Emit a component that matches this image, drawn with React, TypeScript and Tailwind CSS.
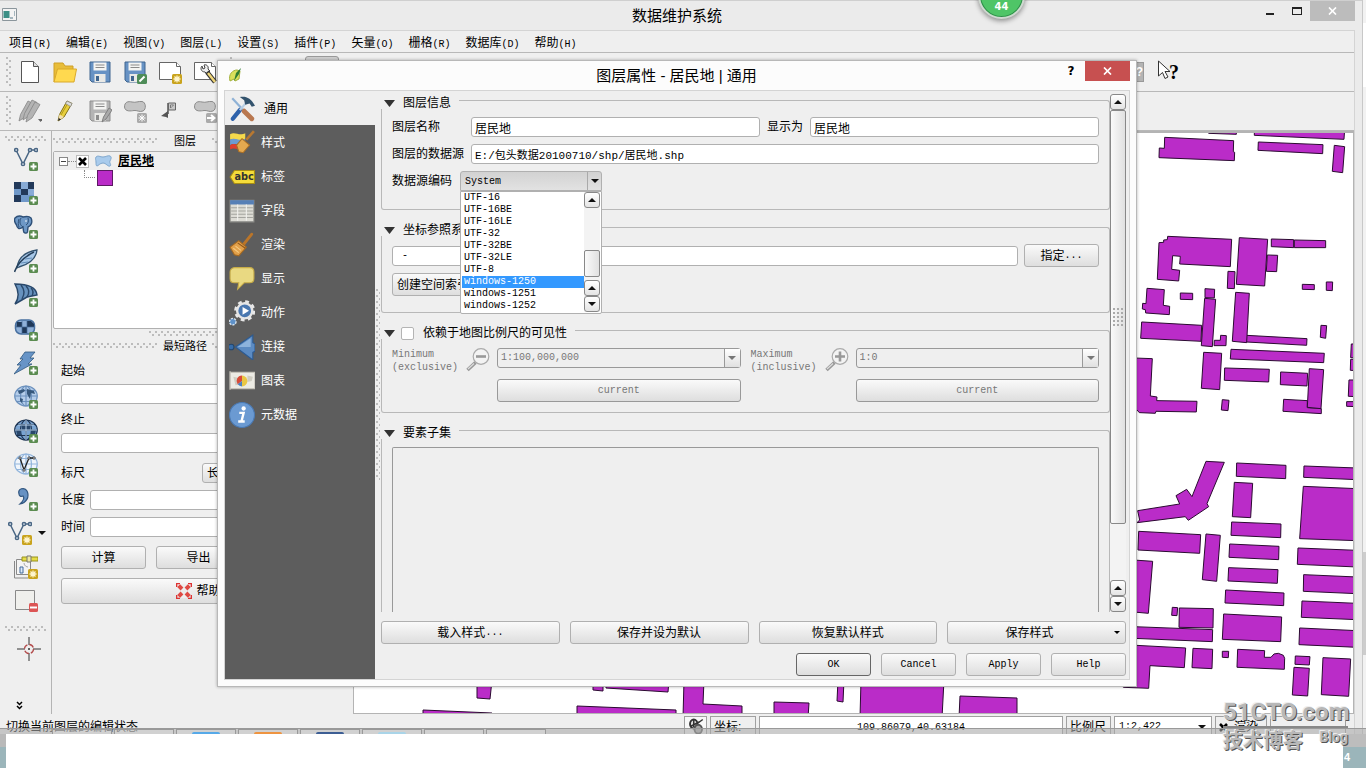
import type { JSX, ReactNode } from 'react'

const CJK = "font-['Liberation_Sans','Noto_Sans_CJK_SC',sans-serif] text-[12px] leading-[14px]"
const MONO = "font-['Liberation_Mono','Noto_Sans_CJK_SC',monospace] text-[10px] leading-[12px]"
const FIELD = 'h-5 min-w-0 rounded-[3px] border border-[#b0b0b0] bg-white px-[3px] text-black outline-none'
const BUTTON =
  'flex items-center justify-center rounded-[3px] border border-[#b0b0b0] bg-linear-to-b from-[#fafafa] to-[#dedede] text-black'
const DOTS =
  'bg-[radial-gradient(circle_at_1px_1px,#bcbcbc_1px,transparent_1.5px),radial-gradient(circle_at_4px_4px,#bcbcbc_1px,transparent_1.5px)] bg-[size:6px_6px]'

interface Kids {
  children: ReactNode
}

const Latin = ({ children }: Kids): JSX.Element => <span className={MONO}>{children}</span>

const Icon = ({ children, size = 24 }: Kids & { size?: number }): JSX.Element => (
  <svg width={size} height={size} viewBox="0 0 24 24" fill="none" className="shrink-0" aria-hidden="true">
    {children}
  </svg>
)

const Caret = ({ up = false, color = '#111' }: { up?: boolean; color?: string }): JSX.Element => (
  <svg width="8" height="4" viewBox="0 0 8 4" className="shrink-0" aria-hidden="true">
    <path d={up ? 'M0 4h8L4 0z' : 'M0 0h8L4 4z'} fill={color} />
  </svg>
)

// Small green "add" badge in the lower right corner of a layer icon.
const Plus = (): JSX.Element => (
  <g>
    <rect x="15" y="15" width="9" height="9" rx="1.5" fill="#5b8c51" />
    <path d="M19.5 16.5v6M16.5 19.5h6" stroke="#fff" strokeWidth="1.8" />
  </g>
)

const Star = (): JSX.Element => (
  <g>
    <rect x="14" y="14" width="10" height="10" rx="1.5" fill="#c9a31d" />
    <path d="M19 15.5v7M15.5 19h7M16.5 16.5l5 5M21.5 16.5l-5 5" stroke="#fff6cf" strokeWidth="1.3" />
  </g>
)

const Nodes = (): JSX.Element => (
  <g stroke="#4a6785" strokeWidth="1.5">
    <path d="M2 3l7 14 7-14h6" />
    <g fill="#e8eef4">
      <circle cx="2.2" cy="3" r="1.6" />
      <circle cx="9" cy="17" r="1.6" />
      <circle cx="16" cy="3" r="1.6" />
      <circle cx="22" cy="3" r="1.6" />
    </g>
  </g>
)

const Floppy = ({ body, line }: { body: string; line: string }): JSX.Element => (
  <g>
    <path d="M2 2h20v20H4l-2-2z" fill={body} stroke={line} />
    <path d="M5.5 2.5h13v8h-13z" fill="#f4f4f2" />
    <path d="M7.5 5h9M7.5 7.5h9" stroke="#8a8a8a" />
    <path d="M6.5 14h11v8h-11z" fill="#e9e9e6" />
    <path d="M8 16h3v5H8z" fill={line} />
  </g>
)

const Sheet = (): JSX.Element => (
  <g fill="#fff" stroke="#666">
    <path d="M1.5 2.5h17l4 4v13h-21z" />
    <path d="M18.5 2.5v4h4" />
  </g>
)

const Blob = (): JSX.Element => (
  <path
    d="M1.5 8C1.5 3 5 2 9 3s6-1 10-.5 4.5 8 1 9.5-6-1-9-.5S2 13 1.5 8z"
    fill="#c4c4c4"
    stroke="#8c8c8c"
  />
)

const Globe = ({ fill, line }: { fill: string; line: string }): JSX.Element => (
  <g stroke={line} strokeWidth="1.2">
    <ellipse cx="12" cy="11" rx="11.3" ry="10" fill={fill} />
    <ellipse cx="12" cy="11" rx="5.5" ry="10" />
    <path d="M1 11h22M3 5.5h18M3 16.5h18M12 1v20" />
  </g>
)

const PENCIL = 'M5 22l1.5-6.500L14 2l5 2.500-8 13.500z'

const FileTools = (): JSX.Element[] => [
  <Icon key="new">
    <path d="M3.5 1.5h12l5 5v16h-17z" fill="#fff" stroke="#555" />
    <path d="M15.5 1.5v5h5" fill="#ddd" stroke="#555" />
  </Icon>,
  <Icon key="open">
    <path d="M1 22V3h9l2 3h8v4" fill="#e8bd3a" stroke="#cf9f26" />
    <path d="M1 22L4.5 9H23.5L21 22z" fill="#ffd94f" stroke="#d9a92b" />
  </Icon>,
  <Icon key="save">
    <Floppy body="#6792c4" line="#3f658f" />
  </Icon>,
  <Icon key="saveas">
    <Floppy body="#6792c4" line="#3f658f" />
    <rect x="14" y="14" width="10" height="10" rx="1.5" fill="#4e8c58" />
    <path d="M16.5 21.5l5-5" stroke="#fff" strokeWidth="2" />
  </Icon>,
  <Icon key="layout">
    <Sheet />
    <Star />
  </Icon>,
  <Icon key="composer">
    <Sheet />
    <path d="M9 6c-2 2-1 6 3 6l2 2 3-3-2-2c1-3-2-5-4-4l1 3-2 1z" fill="#eee" stroke="#444" />
    <path d="M14 12l8 10" stroke="#333" strokeWidth="4.5" />
    <path d="M15 13l7 9" stroke="#f0d77b" strokeWidth="2.5" />
  </Icon>,
]

const EditTools = (): JSX.Element[] => [
  <Icon key="edits">
    <g fill="#b4b4b4" stroke="#858585" strokeWidth=".8">
      <path d={PENCIL} transform="translate(-4 0)" />
      <path d={PENCIL} transform="translate(0 -1)" />
      <path d={PENCIL} transform="translate(3 1)" />
    </g>
    <path d="M20 20h5l-2.500 3z" fill="#666" />
  </Icon>,
  <Icon key="toggle">
    <path d={PENCIL} fill="#e8cf3c" stroke="#807018" />
    <path d="M8 16l7-12" stroke="#b39a1c" />
    <path d="M14 2l5 2.500-1.500 3-5-3z" fill="#ddd" stroke="#888" strokeWidth=".7" />
    <path d="M6.500 15.500l4.500 2.500-6 4z" fill="#f2dfae" />
    <path d="M5 22l.7-3 2.300 1.500z" fill="#222" />
  </Icon>,
  <Icon key="saveedits">
    <Floppy body="#b4b4b4" line="#8d8d8d" />
    <path d="M14 23l1.500-5L21 9l3 2-6 9z" fill="#aaa" stroke="#808080" />
  </Icon>,
  <Icon key="addfeature">
    <Blob />
    <rect x="14" y="14" width="10" height="10" rx="1.5" fill="#aaa" />
    <path d="M19 15.5v7M15.5 19h7M16.5 16.5l5 5M21.5 16.5l-5 5" stroke="#fff" />
  </Icon>,
  <Icon key="move">
    <path d="M3 17l7-5v7l-2-1z" fill="#555" />
    <path d="M10 15V4" stroke="#555" strokeWidth="1.500" />
    <path d="M10.500 4h7v7h-7z" fill="#c8c8c8" stroke="#666" />
    <path d="M12.500 9V6h3l-3 3" fill="#fff" stroke="#777" />
  </Icon>,
  <Icon key="movefeature">
    <Blob />
    <rect x="13" y="14" width="11" height="10" rx="1.5" fill="#aaa" />
    <path d="M14 19h7M18 16l3.500 3-3.500 3" stroke="#fff" strokeWidth="2" />
  </Icon>,
]

const LayerTools = (): JSX.Element[] => [
  <Icon key="vector">
    <Nodes />
    <Plus />
  </Icon>,
  <Icon key="raster">
    <path d="M0 1h20v20H0z" fill="#6f98c9" />
    <path d="M0 1h7v7H0zM14 1h6v7h-6zM7 8h7v6H7zM0 14h7v7H0z" fill="#22395a" />
    <path d="M7 1h7v7H7zM14 8h6v6h-6z" fill="#88abd6" />
    <Plus />
  </Icon>,
  <Icon key="postgis">
    <path
      d="M1 3c3-3 6-2 8-1 4-1 6-1 8 1 2 4 0 8-3 9l-.5 5c-1 2-4 1-4-1l-.5-4C5 15 3 13 2.5 10 1 8 0 5 1 3z"
      fill="#6e98c6"
      stroke="#2e5078"
      strokeWidth="1.4"
    />
    <path d="M7 3c-2 4-1 7 2 9M14 3c1 3 0 6-2 7M5 4c-1 3-1 6 0 8" stroke="#2e5078" />
    <circle cx="12" cy="6" r=".8" fill="#fff" />
    <Plus />
  </Icon>,
  <Icon key="spatialite">
    <path d="M3 19C4 9 11 3 23 1c-1 9-7 14-18 17z" fill="#a8c8e8" stroke="#34536f" strokeWidth="1.3" />
    <path d="M.5 23C3 15 10 8 20 3" stroke="#27415c" strokeWidth="1.5" />
    <path d="M7 14l7-1M11 10l7-1" stroke="#648eb8" />
    <Plus />
  </Icon>,
  <Icon key="mssql">
    <path d="M1 1c9 0 21 2 22 11L13 14 1 21c5-7 4-13 0-20z" fill="#6792be" stroke="#29486b" strokeWidth="1.5" />
    <path d="M7 2c4 5 4 9 1 14M12 3c4 4 3 8 1 11M17 5c3 3 2 6 1 8" stroke="#29486b" strokeWidth="1.4" />
    <Plus />
  </Icon>,
  <Icon key="oracle">
    <rect x="1.5" y="3" width="19" height="14" rx="5.5" fill="#8fb0d8" stroke="#4870a0" strokeWidth="1.5" />
    <path d="M3 5h5v5H2.500zM13 4h4l3 3v3h-7zM8 10h5v6H8z" fill="#1f3858" />
    <path d="M2 10h18M8 4v13M13 4v13" stroke="#456b98" strokeWidth=".7" />
    <Plus />
  </Icon>,
  <Icon key="sqlanywhere">
    <path d="M11 1h10l-5 6h4l-6 6h4L0 23l7-9H3l6-6H6z" fill="#6794c7" stroke="#315980" strokeWidth=".8" />
    <Plus />
  </Icon>,
  <Icon key="wms">
    <Globe fill="#b4cdea" line="#6c91bd" />
    <path d="M4 6l6-2 1 2-3 2-3 1zM13 4l7 2 1 3-4-1-1 6-3-5zM6 13l3 1-1 4-2-2z" fill="#36587c" />
    <Plus />
  </Icon>,
  <Icon key="wcs">
    <Globe fill="#7aa4d2" line="#1d3452" />
    <path d="M8 6h8v5H8zM2 11h5v5H3zM17 11h5l-1 5h-4z" fill="#29476b" />
    <path d="M1 11h22M12 1v20M4 6h16" stroke="#b7d0ea" />
    <Plus />
  </Icon>,
  <Icon key="wfs">
    <Globe fill="#f0f5fb" line="#92b5dc" />
    <path d="M6 5l4 12 5-12h5" stroke="#222" strokeWidth="1.3" />
    <path d="M5 4h2v2H5zM9 16h2v2H9zM14 4h2v2h-2zM19 4h2v2h-2z" fill="#fff" stroke="#333" strokeWidth=".8" />
    <Plus />
  </Icon>,
  <Icon key="csv">
    <path
      d="M5 7c-2-6 6-7 8-3 3 6-1 12-7 13 3-3 5-6 3-8-2 1-4 0-4-2z"
      fill="#6792c3"
      stroke="#31567f"
      strokeWidth="1.2"
    />
    <Plus />
  </Icon>,
]

const LATE_TOOLS: [string, JSX.Element][] = [
  [
    'gps',
    <g key="g">
      <path d="M.5 6v17H14" stroke="#888" />
      <path d="M2.5 4.5h14v15h-14z" fill="#f4f4f4" stroke="#8a8a8a" />
      <path d="M8 2h16v4H8z" fill="#e5dc45" stroke="#96901f" />
      <path d="M13 1h4v6h-4z" fill="#efe9a0" stroke="#777" />
      <path d="M6 12h3v6H6z" fill="#dceafa" stroke="#426b9b" />
      <path d="M10 8c0 3 3 4 4 4" stroke="#aaa" />
      <Star />
    </g>,
  ],
  [
    'remove',
    <g key="r">
      <path d="M1.5 1.5h19v19h-19z" fill="#efefec" stroke="#888" />
      <rect x="15" y="14" width="9" height="9" rx="1.5" fill="#dc5555" />
      <path d="M16 18.5h7" stroke="#fff" strokeWidth="2" />
    </g>,
  ],
]

const SECTIONS: { label: string; art: JSX.Element }[] = [
  {
    label: '通用',
    art: (
      <g>
        <path d="M3 2l12 13" stroke="#8fb2d6" strokeWidth="2" />
        <path d="M10 13L3.500 21" stroke="#2e62ab" strokeWidth="4" strokeLinecap="round" />
        <path d="M10 13l6-7" stroke="#b9cfe4" strokeWidth="2" />
        <path d="M14 14l7 7" stroke="#b97850" strokeWidth="4.5" strokeLinecap="round" />
        <path d="M10 1c6-1 10 1 14 8l-3 1-2-3-4 1-1-4z" fill="#33536d" />
      </g>
    ),
  },
  {
    label: '样式',
    art: (
      <g>
        <path d="M1 4c5-3 8 2 14-1v5C9 12 6 7 1 9z" fill="#f5d94c" />
        <path d="M1 9c5-3 8 2 14-1v4C9 16 6 11 1 14z" fill="#6d9bd0" />
        <path d="M1 14c5-3 8 2 13-1v4c-5 3-8-2-13 1z" fill="#df3f2d" />
        <path d="M23 1l-7 8" stroke="#b87831" strokeWidth="2.4" />
        <path d="M12 8l7 6-6 7-4-1-2-6z" fill="#e5a94f" stroke="#a96e25" />
      </g>
    ),
  },
  {
    label: '标签',
    art: (
      <g>
        <path d="M1 12l4-6h18.500v12H5z" fill="#f5dc3a" stroke="#a98e14" />
        <text x="5" y="15" fontSize="9" fontWeight="700" fontFamily="DejaVu Sans" fill="#333">
          abc
        </text>
      </g>
    ),
  },
  {
    label: '字段',
    art: (
      <g>
        <path d="M1 2h22v20H1z" fill="#dddcd5" stroke="#8c8c88" />
        <path d="M1 2h22v4H1z" fill="#5780b6" />
        <path d="M2 9h20M2 12h20M2 15h20M2 18h20" stroke="#a5a5a0" />
        <path d="M8 6v15M16 6v15" stroke="#f2f2ee" />
      </g>
    ),
  },
  {
    label: '渲染',
    art: (
      <g>
        <path d="M21 2l-8 10" stroke="#ba7529" strokeWidth="2.6" strokeLinecap="round" />
        <path d="M9 8l7 6-7 8-4-1-4-7z" fill="#e2a04a" stroke="#a66920" />
        <path d="M8 10l7 5" stroke="#8d5519" />
        <path d="M4 15l5 4M6 13l5 4" stroke="#f5cc83" />
      </g>
    ),
  },
  {
    label: '显示',
    art: (
      <path
        d="M5 1.500h14c3 0 4 2 4 4v6c0 3-2 4-4 4h-5l-6 6 1-6H5c-3 0-4-2-4-4v-6c0-2 2-4 4-4z"
        fill="#e9d982"
        stroke="#c8ad48"
      />
    ),
  },
  {
    label: '动作',
    art: (
      <g>
        <circle cx="14.500" cy="10" r="8.500" stroke="#e8e8e8" strokeWidth="2.500" strokeDasharray="3.500 3.200" />
        <circle cx="14.500" cy="10" r="7" fill="#4977b0" stroke="#e5e5e5" strokeWidth="2.200" />
        <path d="M12.500 6.500l6 3.500-6 3.500z" fill="#fff" />
        <circle cx="3.500" cy="20" r="3" fill="#5e91c8" stroke="#d8e2eb" strokeWidth="1.3" strokeDasharray="2 1" />
      </g>
    ),
  },
  {
    label: '连接',
    art: (
      <g>
        <circle cx="2" cy="12" r="2.600" fill="#366ca9" stroke="#23476f" />
        <path d="M6 12L22 1v7l2 1v7l-2 1v7z" fill="#5c8bc2" stroke="#2c5a91" />
        <path d="M8 12l12-8v8z" fill="#8db3dc" />
      </g>
    ),
  },
  {
    label: '图表',
    art: (
      <g>
        <path d="M1 3v17M1 4h23v15H1z" fill="#ecebe4" stroke="#c5c3ba" strokeWidth="1.3" />
        <path d="M4 8l4 1 2 6-4 1zM17 7l5 1-1 4-4 1z" fill="#cfcdc2" />
        <path d="M12 12V7a5 5 0 010 10z" fill="#e9c744" />
        <path d="M12 12V7a5 5 0 00-4 8z" fill="#d84b38" />
        <path d="M12 12l-4 3a5 5 0 004 2z" fill="#4d7fc0" />
      </g>
    ),
  },
  {
    label: '元数据',
    art: (
      <g>
        <circle cx="12" cy="12" r="11.5" fill="#6b9ad2" stroke="#4a7ab5" />
        <circle cx="13.5" cy="6" r="2" fill="#fff" />
        <path d="M9.500 10h4l-2 8h3M8.500 18h3" stroke="#fff" strokeWidth="2.2" />
      </g>
    ),
  },
]

// Building footprints, in thirds of a pixel.
const NORTH = [
  '194,52 401,62 400,95 404,97 403,122 177,113 178,84 193,85',
  '326,30 409,30 409,43 326,40',
  '463,30 734,30 732,58 463,46',
  '475,66 669,74 668,101 474,91',
  '703,76 734,80 728,158 697,154',
  '203,349 395,358 391,440 239,432 241,409 218,407 215,448 239,451 236,483 172,478 177,368 191,367 191,360 202,359',
  '418,353 503,358 494,498 409,493',
  '514,357 581,359 581,383 514,380',
  '583,360 677,362 677,383 583,383',
  '502,405 533,406 530,455 499,454',
  '384,454 405,455 403,506 382,505',
  '607,493 643,494 643,509 607,508',
  '679,486 698,486 697,512 679,511',
  '141,505 193,509 190,556 209,559 208,584 137,579 136,569 127,567 128,550 138,551',
  '241,519 278,520 278,539 241,538',
  '315,506 344,508 343,534 315,533',
  '125,606 305,616 303,664 122,655',
  '314,535 347,538 337,680 304,677',
  '438,646 621,656 620,676 438,666',
  '407,517 448,520 440,668 397,664',
  '362,646 379,647 378,677 342,677 343,661 361,661',
  '663,616 680,617 677,655 661,652',
  '393,688 673,700 671,728 391,717',
  '311,697 365,700 359,809 304,805',
  '374,744 508,748 506,786 373,781',
  '542,756 623,760 621,798 541,794',
  '551,838 622,842 622,863 664,866 664,881 549,874',
  '628,746 671,749 663,866 622,862',
  '100,714 157,716 151,828 171,831 170,842 291,844 289,876 168,874 166,880 118,878 111,870 100,865',
  '367,839 387,841 384,872 364,870',
  '754,672 770,672 770,714 752,713',
  '752,718 770,718 770,752 751,751',
  '747,780 770,780 770,830 745,829',
  '740,845 770,845 770,860 740,859',
]

const SOUTH = [
  '318,64 373,67 321,191 326,200 265,241 256,230 111,248 119,240 113,212 239,192 228,167 260,148 276,170',
  '410,69 558,76 557,116 409,109',
  '403,127 458,130 452,233 397,230',
  '395,246 543,252 542,293 393,286',
  '389,312 537,319 536,359 387,352',
  '386,383 534,389 532,430 384,423',
  '377,450 552,459 551,497 375,489',
  '371,522 545,531 542,605 367,598',
  '612,78 770,84 770,119 611,112',
  '610,139 770,146 770,302 599,296',
  '594,324 770,331 770,381 592,373',
  '611,404 770,411 770,461 610,454',
  '606,483 770,490 770,539 604,532',
  '599,564 770,572 770,622 597,614',
  '116,274 302,284 299,340 114,330',
  '318,282 361,286 350,424 307,419',
  '100,360 158,364 145,520 100,516',
  '217,502 233,503 231,527 215,526',
  '238,504 340,506 339,564 237,562',
  '100,560 338,569 337,605 100,595',
  '70,614 257,624 253,683 150,677 146,745 70,742',
  '279,625 338,628 336,686 276,683',
  '367,634 386,634 385,653 367,652',
  '413,628 494,632 493,652 513,652 522,642 535,640 550,646 554,655 553,688 411,682',
  '586,648 630,650 628,675 585,673',
  '582,682 628,685 623,768 577,765',
  '669,653 752,657 746,769 664,764',
]

const FAR_SOUTH = [
  '477,680 492,680 490,699 477,698',
  '423,710 492,713 492,718 423,718',
  '593,680 603,680 603,691 593,690',
  '606,680 669,680 668,692 606,688',
  '577,706 676,710 676,718 577,718',
  '684,680 704,680 703,704 742,706 742,718 683,718',
  '774,702 809,703 808,718 774,718',
  '838,680 844,680 843,702 837,701',
  '861,680 944,680 942,718 860,718',
  '960,696 1017,698 1017,718 959,718',
]

const ENCODINGS = [
  'UTF-16',
  'UTF-16BE',
  'UTF-16LE',
  'UTF-32',
  'UTF-32BE',
  'UTF-32LE',
  'UTF-8',
  'windows-1250',
  'windows-1251',
  'windows-1252',
]

const MENUS = [
  ['项目', 'R'],
  ['编辑', 'E'],
  ['视图', 'V'],
  ['图层', 'L'],
  ['设置', 'S'],
  ['插件', 'P'],
  ['矢量', 'O'],
  ['栅格', 'R'],
  ['数据库', 'D'],
  ['帮助', 'H'],
]

const Shapes = ({ list, width }: { list: string[]; width: number }): JSX.Element => (
  <g fill="#ba2cc8" stroke="#2a0a30" strokeWidth={width}>
    {list.map((points) => (
      <polygon key={points} points={points} />
    ))}
  </g>
)

const MapCanvas = (): JSX.Element => (
  <main className="min-w-0 flex-1 overflow-hidden border border-t-2 border-[#b4b4b4] bg-white">
    <svg className="block h-full w-full" aria-label="map">
      <g transform="translate(746 -13) scale(.3333)">
        <Shapes list={NORTH} width={3} />
      </g>
      <g transform="translate(746 307) scale(.3333)">
        <Shapes list={SOUTH} width={3} />
      </g>
      <g transform="translate(-354 -133)">
        <Shapes list={FAR_SOUTH} width={1} />
      </g>
    </svg>
  </main>
)

const ToolRow = ({ children }: Kids): JSX.Element => (
  <div className="flex h-[39px] shrink-0 items-center border-b border-[#b8b8b8] pl-[6px]">
    <span className={`h-[30px] w-[6px] shrink-0 ${DOTS}`} />
    {children}
  </div>
)

const ToolButton = ({ children }: Kids): JSX.Element => (
  <button type="button" className="flex h-[34px] w-[35px] shrink-0 items-center justify-center">
    {children}
  </button>
)

const ToolColumn = (): JSX.Element => (
  <aside className="flex w-[52px] shrink-0 flex-col items-center border-r border-[#b4b4b4] pt-[5px]">
    <span className={`h-[6px] w-[42px] shrink-0 ${DOTS}`} />
    {LayerTools().map((tool) => (
      <ToolButton key={tool.key}>{tool}</ToolButton>
    ))}
    <button type="button" className="flex h-[34px] w-full shrink-0 items-center gap-[6px] pl-[8px]">
      <Icon>
        <Nodes />
        <Star />
      </Icon>
      <Caret />
    </button>
    {LATE_TOOLS.map(([id, art]) => (
      <ToolButton key={id}>
        <Icon>{art}</Icon>
      </ToolButton>
    ))}
    <span className={`mt-[8px] h-[6px] w-[42px] shrink-0 ${DOTS}`} />
    <span className="ml-[6px]">
      <ToolButton>
        <Icon>
          <path d="M12 0v8M12 16v8M0 12h8M16 12h8M12 11v2M11 12h2" stroke="#333" />
          <circle cx="12" cy="12" r="4.5" stroke="#b24a4a" strokeWidth="1.3" strokeDasharray="5 2" />
        </Icon>
      </ToolButton>
    </span>
    <svg width="7" height="9" viewBox="0 0 7 9" fill="none" className="mt-auto mr-[12px] mb-[4px]" aria-hidden="true">
      <path d="M1 1l2.500 2.500L6 1M1 5l2.500 2.500L6 5" stroke="#000" strokeWidth="1.5" />
    </svg>
  </aside>
)

const DockTitle = ({ children }: Kids): JSX.Element => (
  <div className="flex h-[19px] shrink-0 items-center gap-[5px] text-[11px]">
    <span className={`h-[6px] w-[105px] ${DOTS}`} />
    <h2 className="w-[44px] text-center">{children}</h2>
    <span className={`h-[6px] flex-1 ${DOTS}`} />
  </div>
)

const SidePanel = (): JSX.Element => (
  <aside className="flex w-[301px] shrink-0 flex-col px-[1px]">
    <DockTitle>图层</DockTitle>
    <div className="mt-px h-[178px] shrink-0 rounded-[2px] border border-[#b0b0b0] bg-white">
      <div className="flex h-[18px] items-center bg-[#efefef] pl-[5px]">
        <span className="flex h-[9px] w-[9px] items-center justify-center border border-[#888] bg-white">
          <span className="h-px w-[5px] bg-[#444]" />
        </span>
        <span className="w-[8px] border-t border-dotted border-[#888]" />
        <label className="flex items-center gap-[5px]">
          <input type="checkbox" defaultChecked className="peer sr-only" />
          <span className="flex h-[13px] w-[13px] items-center justify-center border border-[#bbb] bg-white">
            <svg width="9" height="9" viewBox="0 0 9 9" aria-hidden="true">
              <path d="M1 1l7 7M8 1L1 8" stroke="#000" strokeWidth="2.6" />
            </svg>
          </span>
          <svg width="17" height="12" viewBox="0 0 17 12" className="mx-px" aria-hidden="true">
            <path
              d="M1 2c2-2 4 0 7 0s5-2 7-1 1 3 0 5 2 4 0 5-4-3-7-3-5 3-6 3-1-2-1-4-1-3 0-5z"
              fill="#a9cbec"
              stroke="#7fa6cc"
            />
          </svg>
          <span className="font-bold underline">居民地</span>
        </label>
      </div>
      <div className="flex items-start pl-[30px]">
        <span className="mr-[2px] h-[8px] w-[11px] border-b border-l border-dotted border-[#888]" />
        <span className="h-4 w-4 border border-[#5c1a63] bg-[#ba2cc8]" />
      </div>
    </div>
    <span className={`mt-[2px] ml-[96px] h-[5px] shrink-0 ${DOTS}`} />
    <DockTitle>最短路径</DockTitle>
    <form className="flex flex-col pt-[9px] pr-[16px] pl-[8px]">
      <label className="flex flex-col gap-[6px]">
        起始
        <input className={FIELD} />
      </label>
      <label className="mt-[9px] flex flex-col gap-[6px]">
        终止
        <input className={FIELD} />
      </label>
      <div className="mt-[10px] flex items-center">
        <label htmlFor="criterion" className="w-[141px]">
          标尺
        </label>
        <select id="criterion" className={`${BUTTON} h-5 flex-1 appearance-none px-[4px] leading-none`}>
          <option>长度</option>
        </select>
      </div>
      <label className="mt-[7px] flex items-center gap-[5px]">
        长度
        <input className={`${FIELD} flex-1`} />
      </label>
      <label className="mt-[7px] flex items-center gap-[5px]">
        时间
        <input className={`${FIELD} flex-1`} />
      </label>
      <div className="mt-[9px] grid grid-cols-3 gap-[10px]">
        <button type="button" className={`${BUTTON} h-[23px]`}>
          计算
        </button>
        <button type="button" className={`${BUTTON} h-[23px]`}>
          导出
        </button>
        <button type="button" className={`${BUTTON} h-[23px]`}>
          清除
        </button>
      </div>
      <button type="button" className={`${BUTTON} mt-[9px] h-[26px] gap-[4px]`}>
        <Icon size={16}>
          <circle cx="12" cy="12" r="8" stroke="#eee" strokeWidth="6" />
          <path d="M4 4l5 5M20 4l-5 5M4 20l5-5M20 20l-5-5" stroke="#df4a44" strokeWidth="6" />
          <path d="M1 6V1h5M18 1h5v5M1 18v5h5M18 23h5v-5" stroke="#d33" strokeWidth="2" />
        </Icon>
        帮助
      </button>
    </form>
  </aside>
)

const Group = ({ title, open = false, children }: Kids & { title: ReactNode; open?: boolean }): JSX.Element => (
  <section className={open ? 'flex min-h-0 flex-1 flex-col' : ''}>
    <header className="flex h-3 shrink-0 items-center">
      <span className="mr-[8px] ml-[3px]">
        <svg width="11" height="7" viewBox="0 0 11 7" aria-hidden="true">
          <path d="M0 0h11L5.500 7z" fill="#333" />
        </svg>
      </span>
      <h3>{title}</h3>
      <span className="mt-[3px] ml-[8px] flex-1 self-stretch rounded-tr-[3px] border-t border-r border-[#b8b8b8]" />
    </header>
    <div
      className={`border-[#b8b8b8] px-[10px] ${open ? 'flex min-h-0 flex-1 border-x pt-2' : 'rounded-b-[3px] border-x border-b'}`}
    >
      {children}
    </div>
  </section>
)

const ArrowButton = ({ up = false }: { up?: boolean }): JSX.Element => (
  <button
    type="button"
    aria-label={up ? 'up' : 'down'}
    className="flex h-4 w-4 shrink-0 items-center justify-center rounded-[3px] border border-[#888] bg-linear-to-b from-white to-[#e4e4e4]"
  >
    <Caret up={up} />
  </button>
)

const EncodingPopup = (): JSX.Element => (
  <div className="absolute top-full left-0 z-10 flex h-[123px] w-full rounded-b-[2px] border border-[#b0b0b0] bg-white px-px pb-px">
    <ul className={`flex-1 ${MONO}`}>
      {ENCODINGS.map((name) => (
        <li
          key={name}
          className={name === 'windows-1250' ? 'h-3 bg-[#3399ff] pl-[2px] text-white' : 'h-3 pl-[2px]'}
        >
          {name}
        </li>
      ))}
    </ul>
    <div className="flex flex-col bg-[#f3f3f3]">
      <ArrowButton up />
      <span className="flex-1" />
      <span className="h-[27px] rounded-[2px] border border-[#888] bg-linear-to-r from-[#fafafa] to-[#e0e0e0]" />
      <span className="h-[3px]" />
      <ArrowButton up />
      <ArrowButton />
    </div>
  </div>
)

const ScaleField = ({ id, label, note, value, plus }: {
  id: string
  label: string
  note: string
  value: string
  plus?: boolean
}): JSX.Element => (
  <div className="grid flex-1 grid-cols-[67px_24px_minmax(0,1fr)] items-start gap-x-[7px] gap-y-[3px] text-[#777]">
    <label htmlFor={id} className={`${MONO} pb-[2px] leading-[13px]!`}>
      {label}
      <br />
      {note}
    </label>
    <Icon>
      <path d="M1.5 22l8-7.500" stroke="#999" strokeWidth="3.5" />
      <path d="M2 21l6-5.500" stroke="#ddd" strokeWidth="1.2" />
      <circle cx="15" cy="8.5" r="7.8" fill="#f3f3f3" stroke="#aaa" strokeWidth="1.2" />
      <path d={plus ? 'M10 8.500h10M15 3.500v10' : 'M10 8.500h10'} stroke="#999" strokeWidth="2.6" />
    </Icon>
    <div className="flex h-5 rounded-[3px] border border-[#999] bg-[#efefef]">
      <input id={id} disabled defaultValue={value} className={`${MONO} min-w-0 flex-1 px-[3px] text-[#777]`} />
      <button
        type="button"
        disabled
        aria-label="open"
        className="flex w-4 items-center justify-center border-l border-[#999] bg-linear-to-b from-white to-[#e0e0e0]"
      >
        <Caret color="#777" />
      </button>
    </div>
    <button type="button" disabled className={`${BUTTON} ${MONO} col-start-3 h-[23px] border-[#999]! text-[#777]!`}>
      current
    </button>
  </div>
)

const Dialog = (): JSX.Element => (
  <div
    role="dialog"
    aria-label="图层属性"
    className="absolute top-[60px] right-[229px] bottom-[81px] left-[217px] flex flex-col border border-[#b8b8b8] bg-[#fcfcfc] px-[6px] pb-[6px] shadow-[0_0_3px_rgba(0,0,0,.3)]"
  >
    <header className="flex h-[29px] shrink-0 items-start">
      <svg width="16" height="16" viewBox="0 0 16 16" className="mt-[6px] ml-[4px]" aria-hidden="true">
        <path d="M2 14C0 7 5 3 9 3l3 1-1 8-4 2-1-2z" fill="#d9e05b" stroke="#a3b13a" />
        <path d="M13 1l-2 6-5 7 2-8z" fill="#2f7d32" />
      </svg>
      <h1 className="ml-[42px] flex-1 pt-[4px] text-center text-[15px] leading-[22px]">图层属性 - 居民地 | 通用</h1>
      <button type="button" className="mr-[10px] h-5 w-[8px] font-['DejaVu_Sans',sans-serif] text-[12px] font-bold">
        ?
      </button>
      <button type="button" aria-label="close" className="flex h-5 w-[45px] items-center justify-center bg-[#c75050]">
        <svg width="9" height="8" viewBox="0 0 9 8" aria-hidden="true">
          <path d="M1 .5l7 7M8 .5l-7 7" stroke="#fff" strokeWidth="1.7" />
        </svg>
      </button>
    </header>
    <div className="flex min-h-0 flex-1 border border-[#d4d4d4] bg-[#efefef]">
      <nav className="w-[150px] shrink-0 bg-[#5d5d5d]">
        {SECTIONS.map(({ label, art }, i) => (
          <button
            type="button"
            key={label}
            className={`flex h-[34px] w-full items-center pt-px pl-[4px] ${i === 0 ? 'gap-[9px] bg-[#efefef] text-black' : 'gap-[6px] text-white'}`}
          >
            <Icon size={26}>{art}</Icon>
            {label}
          </button>
        ))}
      </nav>
      <span className={`mx-px h-[192px] w-[4px] shrink-0 self-center ${DOTS}`} />
      <div className="flex min-w-0 flex-1 flex-col pr-[3px] pb-[3px]">
        <div className="flex min-h-0 flex-1 pt-[3px]">
          <div className="flex min-w-0 flex-1 flex-col gap-[14px] overflow-hidden pt-[3px]">
            <Group title="图层信息">
              <div className="grid grid-cols-[auto_minmax(0,1fr)_auto_minmax(0,1fr)] items-center gap-y-[7px] pt-2 pb-[18px]">
                <label htmlFor="layer-name" className="w-[79px]">
                  图层名称
                </label>
                <input id="layer-name" className={FIELD} defaultValue="居民地" />
                <label htmlFor="display-name" className="px-[7px]">
                  显示为
                </label>
                <input id="display-name" className={FIELD} defaultValue="居民地" />
                <label htmlFor="source">图层的数据源</label>
                <input
                  id="source"
                  className={`${FIELD} ${MONO} col-span-3 text-[11px]!`}
                  defaultValue="E:/包头数据20100710/shp/居民地.shp"
                />
                <div className="col-span-4 flex items-center">
                  <label htmlFor="encoding" className="w-[68px]">
                    数据源编码
                  </label>
                  <div className="relative w-[142px]">
                    <select
                      id="encoding"
                      className={`${MONO} block h-5 w-full appearance-none rounded-t-[3px] border border-[#b0b0b0] bg-linear-to-b from-[#d2d2d2] to-[#e2e2e2] px-[4px] pt-[2px]`}
                    >
                      <option>System</option>
                    </select>
                    <span className="pointer-events-none absolute inset-y-px right-px flex w-[14px] items-center justify-center border-l border-[#aaa]">
                      <Caret />
                    </span>
                    <EncodingPopup />
                  </div>
                </div>
              </div>
            </Group>
            <Group title="坐标参照系">
              <div className="flex flex-col items-start gap-[6px] pt-[8px] pb-[16px]">
                <div className="flex w-full items-center gap-[6px]">
                  <input aria-label="坐标参照系" className={`${FIELD} ${MONO} flex-1 pl-[9px]`} defaultValue="-" />
                  <button type="button" className={`${BUTTON} h-[23px] w-[75px]`}>
                    指定<Latin>...</Latin>
                  </button>
                </div>
                <button type="button" className={`${BUTTON} h-[23px] w-[82px]`}>
                  创建空间索引
                </button>
              </div>
            </Group>
            <Group
              title={
                <label className="flex items-center gap-[9px]">
                  <input
                    type="checkbox"
                    className="-ml-[2px] h-[13px] w-[13px] appearance-none rounded-[2px] border border-[#b4b4b4] bg-white"
                  />
                  依赖于地图比例尺的可见性
                </label>
              }
            >
              <div className="flex gap-[10px] pt-[9px] pb-[10px]">
                <ScaleField id="min" label="Minimum" note="(exclusive)" value="1:100,000,000" />
                <ScaleField id="max" label="Maximum" note="(inclusive)" value="1:0" plus />
              </div>
            </Group>
            <Group title="要素子集" open>
              <textarea
                aria-label="要素子集"
                className="flex-1 resize-none rounded-t-[2px] border border-b-0 border-[#999] bg-[#efefef]"
              />
            </Group>
          </div>
          <div className="flex w-4 shrink-0 flex-col bg-[#f3f3f3]">
            <ArrowButton up />
            <div className="flex h-[414px] items-center justify-center rounded-[2px] border border-[#888] bg-linear-to-r from-[#fafafa] to-[#e0e0e0]">
              <span className="h-[19px] w-[11px] bg-[radial-gradient(circle_at_1px_1px,#aaa_1px,transparent_1.5px)] bg-[size:4px_4px]" />
            </div>
            <span className="flex-1" />
            <ArrowButton up />
            <ArrowButton />
          </div>
        </div>
        <div className="mt-[9px] grid grid-cols-4 gap-[10px]">
          <button type="button" className={`${BUTTON} h-[23px]`}>
            载入样式<Latin>...</Latin>
          </button>
          <button type="button" className={`${BUTTON} h-[23px]`}>
            保存并设为默认
          </button>
          <button type="button" className={`${BUTTON} h-[23px]`}>
            恢复默认样式
          </button>
          <button type="button" className={`${BUTTON} relative h-[23px] pr-[14px]`}>
            保存样式
            <svg width="6" height="3" viewBox="0 0 6 3" className="absolute right-[5px]" aria-hidden="true">
              <path d="M0 0h6L3 3z" />
            </svg>
          </button>
        </div>
        <div className={`mt-[9px] flex justify-end gap-[10px] ${MONO}`}>
          <button type="button" className={`${BUTTON} h-[23px] w-[75px] border-[#666]!`}>
            OK
          </button>
          <button type="button" className={`${BUTTON} h-[23px] w-[75px]`}>
            Cancel
          </button>
          <button type="button" className={`${BUTTON} h-[23px] w-[75px]`}>
            Apply
          </button>
          <button type="button" className={`${BUTTON} h-[23px] w-[75px]`}>
            Help
          </button>
        </div>
      </div>
    </div>
  </div>
)

const STATUS_BOX = 'flex h-[22px] items-center border border-[#a0a0a0]'

const StatusBar = (): JSX.Element => (
  <footer className="flex h-[54px] shrink-0 items-start gap-[3px] pt-[2px] pr-[8px] pl-[6px]">
    <span className="flex-1 pt-[4px]">切换当前图层的编辑状态</span>
    <button type="button" aria-label="extents" className={`${STATUS_BOX} w-[23px] justify-center bg-[#f8f8f8]`}>
      <Icon size={18}>
        <ellipse cx="9" cy="8" rx="5" ry="6" fill="#ddd" stroke="#333" strokeWidth="2.500" />
        <ellipse cx="15" cy="15" rx="5" ry="6" fill="#aaa" stroke="#555" strokeWidth="2.500" />
        <path d="M5 11l12-6M9 2v10M17 5l4-3" stroke="#333" strokeWidth="2" />
      </Icon>
    </button>
    <label htmlFor="coords" className={`${STATUS_BOX} w-[46px] pl-[3px]`}>
      坐标:
    </label>
    <input
      id="coords"
      defaultValue="109.86079,40.63184"
      className={`${STATUS_BOX} ${MONO} w-[304px] bg-white text-center`}
    />
    <label htmlFor="scale" className={`${STATUS_BOX} w-[45px] px-[3px]`}>
      比例尺
    </label>
    <div className={`${STATUS_BOX} w-[98px] bg-white pr-[5px]`}>
      <input id="scale" defaultValue="1:2,422" className={`${MONO} min-w-0 flex-1 pl-[4px]`} />
      <Caret />
    </div>
    <label className={`${STATUS_BOX} w-[52px] gap-[6px] pl-[3px]`}>
      <input type="checkbox" defaultChecked className="peer sr-only" />
      <svg width="9" height="9" viewBox="0 0 9 9" aria-hidden="true">
        <path d="M1 1l7 7M8 1L1 8" stroke="#000" strokeWidth="2.6" />
      </svg>
      渲染
    </label>
    <span className={`${STATUS_BOX} w-[76px]`} />
  </footer>
)

const TASKS = [
  'bg-transparent',
  'bg-transparent',
  'bg-[#56a9e8]',
  'bg-[#ee9440]',
  'bg-[#3d5e94]',
  'bg-[#a9d4e8]',
  'bg-transparent',
  'bg-transparent',
]

const Taskbar = (): JSX.Element => (
  <div className="absolute inset-x-0 bottom-0 flex h-[40px] flex-col">
    <div className="flex h-[6px] shrink-0 gap-[2px] border-t border-[#999] bg-[#aaa]/60 pl-[52px]">
      {TASKS.map((color, i) => (
        <span key={i} className="flex w-[60px] items-end justify-center border-x border-t border-[#999] bg-white/20">
          <span className={`h-[2px] w-[28px] rounded-t-[2px] ${color}`} />
        </span>
      ))}
    </div>
    <div className="flex flex-1">
      <span className="w-[6px] border-t-[13px] border-[#b9b9b9] bg-[#9bb5ba]" />
      <span className="flex-1 bg-white" />
      <span className="w-[23px] border-t-[13px] border-[#bdbdbd] bg-[#9bb5ba] pl-px text-[11px] leading-[21px] font-bold text-white">
        4
      </span>
    </div>
  </div>
)

const Watermark = (): JSX.Element => (
  <div className="absolute right-[18px] bottom-[14px] w-[125px] font-['Roboto','Noto_Sans_CJK_SC',sans-serif] font-bold text-[#b8b8b8] [text-shadow:1px_1px_0_#555,-1px_-1px_0_#eee]">
    <p className="border-b-2 border-[#888] text-[24px] leading-[28px]">51CTO.com</p>
    <p className="flex items-start justify-between text-[14px] leading-[18px]">
      <span className="text-[20px] leading-[26px]">技术博客</span>
      Blog
    </p>
  </div>
)

const App = (): JSX.Element => (
  <div className={`relative flex h-screen overflow-hidden bg-[#ebebeb] text-black ${CJK}`}>
    <div className="flex min-w-0 flex-1 flex-col border-t border-[#cfcfcf]">
      <header className="flex h-[29px] shrink-0 items-start pr-[7px]">
        <svg width="16" height="13" viewBox="0 0 16 13" className="mt-[7px] ml-[2px]" aria-hidden="true">
          <path d="M.5.5h14v12H.5z" fill="#f3f3f3" stroke="#8b969c" />
          <path d="M1.5 3h6v7h-6z" fill="#3c8f86" />
          <path d="M8 9h3v2H8zM12 3h1v5h-1z" fill="#a5b6be" />
        </svg>
        <h1 className="ml-[70px] flex-1 pt-[4px] text-center text-[15px] leading-[22px]">数据维护系统</h1>
        <button type="button" aria-label="minimize" className="mt-[12px] mr-[18px] h-[2px] w-[8px] bg-[#222]" />
        <button
          type="button"
          aria-label="maximize"
          className="mt-[6px] mr-[8px] h-[8px] w-[10px] border border-t-2 border-[#222]"
        />
        <button type="button" aria-label="close" className="flex h-5 w-[45px] items-center justify-center bg-[#bcbcbc]">
          <svg width="9" height="8" viewBox="0 0 9 8" aria-hidden="true">
            <path d="M1 .5l7 7M8 .5l-7 7" stroke="#fff" strokeWidth="1.7" />
          </svg>
        </button>
      </header>
      <div className="mr-[7px] flex min-h-0 flex-1 flex-col border-t border-r border-[#d4d4d4] bg-[#efefef]">
        <nav className="flex h-[22px] shrink-0 items-center gap-[15px] border-b border-[#b8b8b8] pt-[3px] pl-[9px]">
          {MENUS.map(([name, key]) => (
            <button type="button" key={name}>
              {name}
              <Latin>({key})</Latin>
            </button>
          ))}
        </nav>
        <ToolRow>
          {FileTools().map((tool) => (
            <ToolButton key={tool.key}>{tool}</ToolButton>
          ))}
          <span className={`ml-[8px] h-[30px] w-[6px] ${DOTS}`} />
          <span className="ml-[69px] h-[32px] w-[34px] rounded-[3px] border border-[#999] bg-[#d0d0d0]" />
          <span className="mr-[13px] ml-auto flex h-5 w-[20px] items-center justify-end border border-[#999] bg-[#b4b4b4] font-bold text-white">
            ?
          </span>
          <button type="button" aria-label="help" className="mr-[171px]">
            <svg width="26" height="28" viewBox="0 0 26 28" aria-hidden="true">
              <path d="M1.5 3v15l4-3.500 2.500 6 3-1.500-3-5.500h5z" fill="#fff" stroke="#333" />
              <text x="12" y="21" fontSize="20" fontWeight="700" fontFamily="Liberation Serif" fill="#000">
                ?
              </text>
            </svg>
          </button>
        </ToolRow>
        <ToolRow>
          {EditTools().map((tool) => (
            <ToolButton key={tool.key}>{tool}</ToolButton>
          ))}
        </ToolRow>
        <div className="flex min-h-0 flex-1">
          <ToolColumn />
          <SidePanel />
          <MapCanvas />
        </div>
        <StatusBar />
      </div>
    </div>
    <div className="flex w-[4px] shrink-0 flex-col border-l border-[#c8c8c8] bg-[#f2f2f2]">
      <span className="mt-[23px] h-[64px] bg-white" />
      <span className="mt-[465px] h-[103px] bg-[#cdcdcd]" />
    </div>
    <Dialog />
    <div className="absolute -top-[28px] right-[341px] flex h-[47px] w-[47px] items-end justify-center rounded-full border-2 border-[#cfd8d0] bg-[#4fc567] pb-[4px] font-['DejaVu_Sans',sans-serif] text-[10px] leading-[12px] font-bold text-white shadow-[inset_0_0_0_1px_#2f8b4a,0_2px_5px_rgba(0,0,0,.4)]">
      44
    </div>
    <Taskbar />
    <Watermark />
  </div>
)

export default App
